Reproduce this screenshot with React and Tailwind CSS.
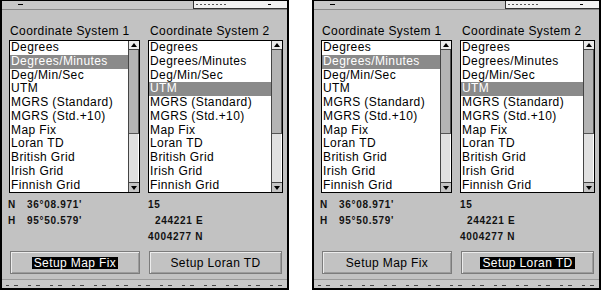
const ITEMS = [
  "Degrees",
  "Degrees/Minutes",
  "Deg/Min/Sec",
  "UTM",
  "MGRS (Standard)",
  "MGRS (Std.+10)",
  "Map Fix",
  "Loran TD",
  "British Grid",
  "Irish Grid",
  "Finnish Grid",
];

function Arrow({ up }) {
  if (up) {
    return <div className="h-0 w-0 border-x-[3px] border-b-[4px] border-x-transparent border-b-black" />;
  }
  return <div className="h-0 w-0 border-x-[3px] border-t-[4px] border-x-transparent border-t-black" />;
}

function ScrollBar() {
  return (
    <div className="flex w-[11px] shrink-0 flex-col border-l border-[#444]">
      <div className="flex h-[9px] items-center justify-center border-b border-[#444] bg-[#ececec]">
        <Arrow up />
      </div>
      <div className="h-[84px] border-b border-r border-[#555] bg-[#b4b4b4]" />
      <div className="flex-1 border-r border-white bg-[#e0e0e0]" />
      <div className="flex h-[10px] items-center justify-center border-t border-[#444] bg-[#c4c4c4]">
        <Arrow />
      </div>
    </div>
  );
}

function ListBox({ className, selected }) {
  return (
    <div className={`flex h-[153px] overflow-hidden border border-black bg-white ${className}`}>
      <div className="flex-1">
        {ITEMS.map((item) => (
          <div
            key={item}
            className={`h-[13.75px] whitespace-nowrap pl-[1px] leading-[11px] ${
              item === selected ? "bg-[#8a8a8a] text-white" : "text-black"
            }`}
          >
            <span className="relative top-[1px]">{item}</span>
          </div>
        ))}
      </div>
      <ScrollBar />
    </div>
  );
}

function SetupButton({ className, label, active }) {
  return (
    <div
      className={`flex h-[23px] items-center justify-center border border-[#7c7c7c] bg-[#c2c2c2] shadow-[inset_1px_1px_0_#ececec,inset_-1px_-1px_0_#9c9c9c] ${className}`}
    >
      <span className={active ? "bg-black px-[2px] leading-[12px] text-white" : "px-[2px] leading-[12px] text-black"}>
        {label}
      </span>
    </div>
  );
}

function Panel({ active }) {
  return (
    <div className="flex h-[290px] w-[289px] flex-col border-b-2 border-l-2 border-r-2 border-t border-black bg-[#c2c2c2]">
      <div className="flex h-[9px] border-b border-[#8a8a8a] bg-[#c8c8c8]">
        <div className="ml-[16px] mt-[3px] h-px w-[5px] bg-black" />
        <div className="ml-auto flex h-full w-[94px] items-start border-b border-l border-[#333] bg-[#f2f2f2]">
          <div className="ml-[2px] mt-[3px] h-px w-[30px] bg-[repeating-linear-gradient(90deg,#555_0_2px,transparent_2px_4px)]" />
          <div className="ml-[42px] mt-[3px] h-px w-[3px] bg-black" />
        </div>
      </div>

      <div className="flex-1 pl-[7px] pt-[14px] font-['Liberation_Sans',Arial,sans-serif] text-[12px] tracking-[0.4px]">
        <div className="flex leading-[15px] text-black">
          <div className="w-[139px] pl-[1px]">Coordinate System 1</div>
          <div className="pl-[2px]">Coordinate System 2</div>
        </div>

        <div className="mt-[1px] flex gap-[8px]">
          <ListBox className="w-[131px]" selected="Degrees/Minutes" />
          <ListBox className="w-[135px]" selected="UTM" />
        </div>

        <div className="-ml-[2px] mt-[4px] flex text-[10px] font-bold leading-[16px] tracking-[0.7px] text-[#111]">
          <div className="w-[141px]">
            <div className="flex">
              <span className="w-[20px] pl-[1px]">N</span>
              <span>36°08.971'</span>
            </div>
            <div className="flex">
              <span className="w-[20px] pl-[1px]">H</span>
              <span>95°50.579'</span>
            </div>
          </div>
          <div>
            <div>15</div>
            <div className="pl-[7px]">244221 E</div>
            <div>4004277 N</div>
          </div>
        </div>

        <div className="mt-[6px] flex gap-[9px] pl-[1px]">
          <SetupButton className="w-[130px]" label="Setup Map Fix" active={active === "map"} />
          <SetupButton className="w-[133px]" label="Setup Loran TD" active={active === "loran"} />
        </div>
      </div>

      <div className="flex h-[9px] flex-col justify-end border-t border-[#9a9a9a] bg-[#c8c8c8] pb-[2px]">
        <div className="mx-[4px] h-px bg-[repeating-linear-gradient(90deg,#444_0_3px,transparent_3px_8px,#444_8px_12px,transparent_12px_22px)]" />
      </div>
    </div>
  );
}

export default function App() {
  return (
    <div className="flex h-[290px] w-[602px] gap-[23px] bg-white">
      <Panel active="map" />
      <Panel active="loran" />
    </div>
  );
}
